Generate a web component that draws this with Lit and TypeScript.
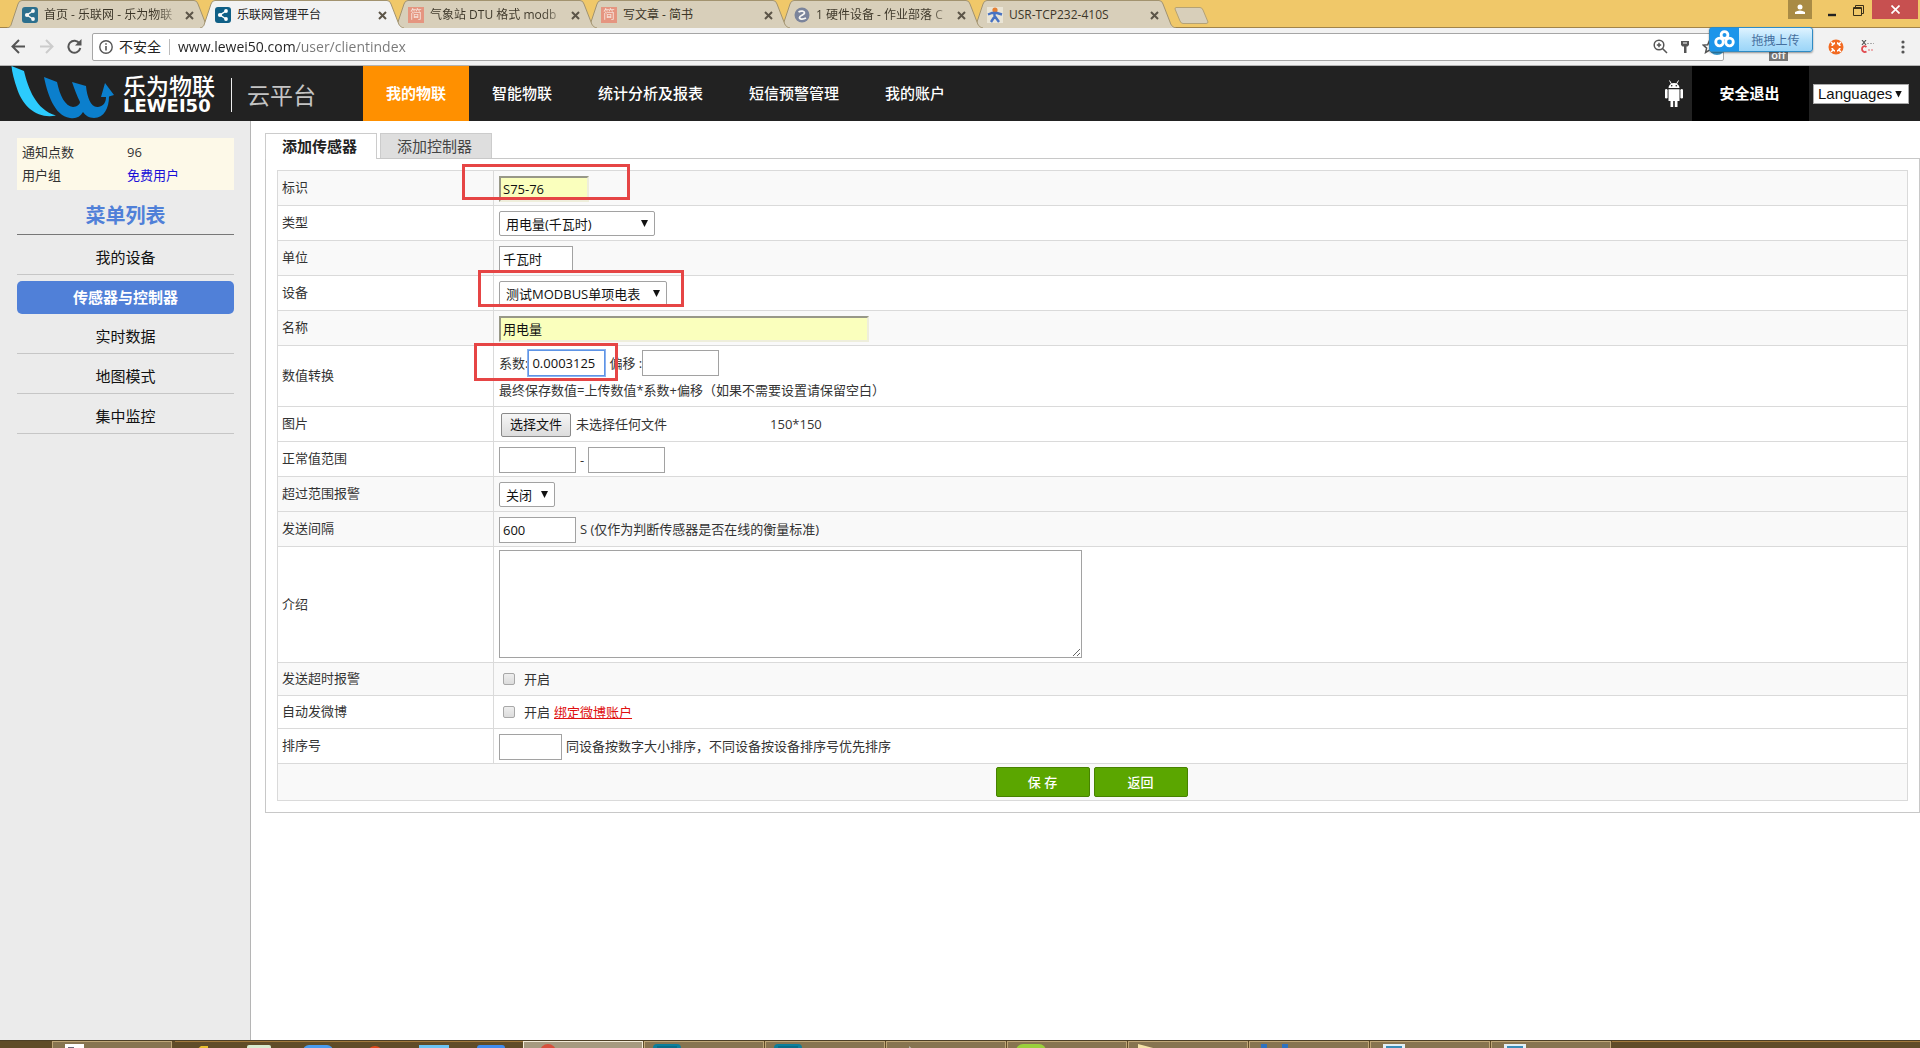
import { LitElement, html, svg, css } from "lit";
import { customElement } from "lit/decorators.js";
import { classMap } from "lit/directives/class-map.js";

const shareIcon = html`<svg class="fav" viewBox="0 0 16 16" aria-hidden="true">
  <rect width="16" height="16" rx="3" fill="#0f5f86" />
  <path d="M11 4 5 8l6 4" stroke="#fff" stroke-width="1.5" fill="none" />
  <circle cx="11" cy="4" r="1.9" fill="#fff" /><circle cx="5" cy="8" r="2.1" fill="#fff" />
  <circle cx="11" cy="12" r="1.9" fill="#fff" />
</svg>`;
const jianIcon = html`<span class="fav jian" aria-hidden="true">简</span>`;
const zIcon = html`<svg class="fav" viewBox="0 0 16 16" aria-hidden="true">
  <circle cx="8" cy="8" r="7.5" fill="#6b7896" />
  <path d="M4.500 5C7 3.500 10.500 4 10.500 6 10.500 8 5.500 8.500 5.500 10.500 5.500 12.500 9 12.500 12 11" stroke="#fff" stroke-width="1.800" fill="none" />
</svg>`;
const manIcon = html`<svg class="fav" viewBox="0 0 16 16" aria-hidden="true">
  <rect width="16" height="16" fill="#eee9dc" />
  <circle cx="8" cy="3" r="2.600" fill="#e8731c" />
  <path d="M1 7.500 5 6h5l5 1.500M7.500 6v4M7.500 9.500 4 15M8 9.500l4 5.500" stroke="#2f62c4" stroke-width="2.400" fill="none" />
</svg>`;

const browserTabs = [
  { title: "首页 - 乐联网 - 乐为物联", icon: shareIcon, active: false, fade: true },
  { title: "乐联网管理平台", icon: shareIcon, active: true, fade: false },
  { title: "气象站 DTU 格式 modb", icon: jianIcon, active: false, fade: true },
  { title: "写文章 - 简书", icon: jianIcon, active: false, fade: false },
  { title: "1 硬件设备 - 作业部落 C", icon: zIcon, active: false, fade: true },
  { title: "USR-TCP232-410S", icon: manIcon, active: false, fade: false },
];

@customElement("browser-chrome")
class BrowserChrome extends LitElement {
  static styles = css`
    :host { display: block; position: relative; font: 12px/16px "Open Sans", "Noto Sans CJK SC", sans-serif; }
    button { border: 0; padding: 0; background: none; font: inherit; color: inherit; display: grid; place-items: center; }
    .strip { display: flex; height: 28px; background: #f0c869; padding-left: 7px; border-bottom: 1px solid #a28449; box-sizing: border-box; }
    .tabs { display: flex; position: relative; }
    .tab { position: relative; width: 193px; height: 28px; display: flex; align-items: center; box-sizing: border-box; padding: 2px 0 0 15px; z-index: 1; color: #3c3628; }
    .tab:nth-child(1) { z-index: 6; } .tab:nth-child(3) { z-index: 5; } .tab:nth-child(4) { z-index: 4; }
    .tab:nth-child(5) { z-index: 3; } .tab:nth-child(6) { z-index: 2; }
    .tab.active { z-index: 9; color: #222; }
    .shape { position: absolute; left: 0; top: 0; width: 204px; height: 28px; z-index: -1; fill: #d8cfba; stroke: #a2936f; }
    .active .shape { fill: #f2f2f2; }
    .fav { width: 16px; height: 16px; flex: none; margin-right: 6px; }
    .tab:not(.active) .fav { opacity: 0.85; }
    .jian { background: #e88b76; color: #fbe3dc; font-size: 12px; line-height: 16px; text-align: center; }
    .title { flex: 1; white-space: nowrap; }
    .fade { color: transparent; background: linear-gradient(90deg, #3c3628 85%, #3c362833 100%) text; }
    .x { width: 9px; height: 9px; margin: 0 6px 0 8px; stroke: #5c5548; stroke-width: 2; }
    .new { width: 38px; height: 19px; margin: 6px 0 0 8px; }
    .grow { flex: 1; }
    .user { width: 24px; height: 19px; background: #a98b45; margin-right: 7px; }
    .win { width: 26px; height: 19px; }
    .win svg { margin-top: 2px; }
    .close { width: 46px; height: 19px; background: #c75050; margin: 0 2px 0 1px; }
    .bar { display: flex; align-items: center; height: 38px; background: #f2f2f2; border-bottom: 1px solid #b4b4b4; box-sizing: border-box; padding: 0 11px; }
    .nav { width: 28px; height: 28px; place-items: center start; }
    .addr { flex: 1; display: flex; align-items: center; height: 28px; box-sizing: border-box; background: #fff; border: 1px solid #a6a6a6; border-radius: 2px; padding: 0 6px; margin-right: 185px; font-size: 14px; color: #222; margin-left: -3px; }
    .sec { padding: 0 8px 0 6px; border-right: 1px solid #bbb; line-height: 16px; margin-right: 8px; }
    .url { flex: 1; border: 0; outline: 0; padding: 0; font: inherit; background: linear-gradient(90deg, #222 119px, #777 119px) text; color: transparent; }
    .tools { display: flex; gap: 12px; align-items: center; }
    .ext { display: flex; align-items: center; position: absolute; right: 12px; top: 39px; gap: 17px; }
    .hidden-ext { position: absolute; right: 131px; top: 45px; display: flex; gap: 48px; }
    .dot { width: 16px; height: 10px; border-radius: 0 0 8px 8px; background: #8fa3ae; }
    .dot.first { background: #3a9bd0; }
    .off { position: absolute; right: 132px; top: 50px; width: 19px; height: 11px; background: #777; color: #fff; font-weight: 600; line-height: 10px; text-align: center; font-size: 11px; }
    .upload { position: absolute; right: 107px; top: 27px; width: 104px; height: 25px; box-sizing: border-box; border: 1px solid #2f8bc4; border-radius: 3px; display: flex; background: linear-gradient(#dff3ff, #b7e2fb 50%, #9bd5f8); box-shadow: 0 1px 2px #0006; color: #456f9e; z-index: 12; }
    .upload span { flex: 1; padding-top: 2px; }
    .cloud { width: 29px; height: 23px; background: #1d95ea; }
  `;
  render() {
    return html`
      <div class="strip">
        <div class="tabs">
          ${browserTabs.map(
            (t) => html`<div class=${classMap({ tab: true, active: t.active })}>
              <svg class="shape" viewBox="0 0 204 28" aria-hidden="true">
                <path d="M0 28C4 27 4 25 5 22L11 4Q12 .5 15 .5H187Q190 .5 191 4L198 22C199 25 200 27 204 28" />
              </svg>
              ${t.icon}<span class=${classMap({ title: true, fade: t.fade })}>${t.title}</span>
              <button aria-label="关闭标签"><svg class="x" viewBox="0 0 9 9"><path d="M1 1l7 7M8 1 1 8" /></svg></button>
            </div>`
          )}
        </div>
        <button class="new" aria-label="新标签">
          <svg width="38" height="19" viewBox="0 0 38 19"><path d="M3 1.500H27Q29 1.500 30 4L35 16Q35 17.500 33 17.500H10Q8 17.500 7 15L2 3Q2 1.500 3 1.500Z" fill="#d8cfba" stroke="#b5a274" /></svg>
        </button>
        <span class="grow"></span>
        <button class="user" aria-label="用户"><svg width="10" height="12" viewBox="0 0 10 12" fill="#fff"><circle cx="5" cy="3" r="2.500" /><path d="M0 10V8q5-3 10 0v2z" /></svg></button>
        <button class="win" aria-label="最小化"><svg width="8" height="12" viewBox="0 0 8 12"><path d="M0 10h8" stroke="#222" stroke-width="2.400" /></svg></button>
        <button class="win" aria-label="还原"><svg width="11" height="11" viewBox="0 0 11 11" fill="none" stroke="#3a3018"><path d="M2.500 2.500V.5h8v8h-2" /><path d="M.5 2.500h8v8h-8zM.5 3.500h8" /></svg></button>
        <button class="close" aria-label="关闭"><svg width="9" height="9" viewBox="0 0 9 9" stroke="#fff" stroke-width="1.700"><path d="M.5.5l8 8M8.500.5l-8 8" /></svg></button>
      </div>
      <div class="bar">
        <button class="nav" aria-label="后退"><svg width="15" height="15" viewBox="0 0 15 15" fill="none" stroke="#555" stroke-width="2"><path d="M14 7.500H2M8 1 1.500 7.500 8 14" /></svg></button>
        <button class="nav" aria-label="前进"><svg width="15" height="15" viewBox="0 0 15 15" fill="none" stroke="#ccc" stroke-width="2"><path d="M1 7.500h12M7 1l6.500 6.500L7 14" /></svg></button>
        <button class="nav" aria-label="刷新"><svg width="15" height="15" viewBox="0 0 15 15" fill="none" stroke="#555" stroke-width="2"><path d="M12.500 4.500A6 6 0 1 0 13.300 9" /><path d="M14.500 0v6.500H8z" fill="#555" stroke="none" /></svg></button>
        <div class="addr">
          <svg width="14" height="14" viewBox="0 0 14 14" fill="none" stroke="#555" stroke-width="1.400"><circle cx="7" cy="7" r="6.200" /><path d="M7 6v4.500M7 3.200v1.600" stroke-width="1.600" /></svg>
          <span class="sec">不安全</span>
          <input class="url" aria-label="网址" .value=${"www.lewei50.com/user/clientindex"} />
          <div class="tools">
            <svg width="15" height="15" viewBox="0 0 15 15" fill="none" stroke="#555" stroke-width="1.500"><circle cx="6" cy="6" r="4.800" /><path d="M9.500 9.500 14 14M6 3.800v4.400M3.800 6h4.400" /></svg>
            <svg width="10" height="14" viewBox="0 0 10 14"><path d="M1 1h8v4L7.500 6.500H6.500V13H4V6.500H2.500L1 5z" fill="#555" /><path d="M3 3h4" stroke="#fff" /></svg>
            <svg width="15" height="15" viewBox="0 0 15 15" fill="none" stroke="#555" stroke-width="1.500"><path d="M7.500 1.500l1.800 4.200 4.500.4-3.400 3 1 4.400-3.900-2.400-3.900 2.400 1-4.400-3.400-3 4.500-.4z" /></svg>
          </div>
        </div>
      </div>
      <div class="hidden-ext"><span class="dot first"></span><span class="dot"></span></div>
      <span class="off">off</span>
      <div class="ext">
        <svg width="16" height="16" viewBox="0 0 16 16"><circle cx="8" cy="8" r="7.500" fill="#f26a21" /><circle cx="8" cy="8" r="4" fill="none" stroke="#fff" stroke-width="1.800" /><path d="M5 5 3 3M11 5l2-2M5 11l-2 2M11 11l2 2" stroke="#fff" stroke-width="1.500" /><path d="M8 2v3.500M2 8h3.500M8 14v-3.500M14 8h-3.500" stroke="#f26a21" stroke-width="2" /></svg>
        <svg width="14" height="14" viewBox="0 0 14 14" fill="none"><path d="M1 0l4 5M5 0 1 5" stroke="#555" stroke-width="1.200" /><path d="M6 3.500h7" stroke="#aaa" stroke-dasharray="2 1" /><path d="M5.500 7C3 5 1 7 1 9s2 4 4.500 2.500" stroke="#e0474c" stroke-width="1.800" /><path d="M7 10h6" stroke="#e9989a" stroke-width="1.500" stroke-dasharray="2 1" /></svg>
        <svg width="16" height="16" viewBox="0 0 16 16" fill="#555"><circle cx="11" cy="3" r="1.600" /><circle cx="11" cy="8" r="1.600" /><circle cx="11" cy="13" r="1.600" /></svg>
      </div>
      <button class="upload">
        <svg class="cloud" viewBox="0 0 29 23" fill="none" stroke="#fff" stroke-width="2.800"><circle cx="14.500" cy="7" r="3.400" /><circle cx="9.500" cy="14" r="3.800" /><circle cx="19.500" cy="14" r="3.800" /></svg>
        <span>拖拽上传</span>
      </button>
    `;
  }
}

@customElement("site-header")
class SiteHeader extends LitElement {
  static styles = css`
    :host { display: flex; height: 55px; background: #222; color: #fff; font: 15px/20px "Open Sans", "Noto Sans CJK SC", sans-serif; }
    a { color: inherit; text-decoration: none; }
    .logo { display: flex; align-items: center; width: 363px; box-sizing: border-box; padding-left: 10px; }
    .name { display: flex; flex-direction: column; margin-left: 7px; padding-top: 2px; width: 93px; }
    .cn { font-size: 23px; line-height: 22px; font-weight: 500; }
    .en { font: bold 18px/18px "DejaVu Sans", sans-serif; }
    .cloud { border-left: 1px solid #eee; margin-left: 15px; padding-left: 15px; font-size: 23px; line-height: 34px; color: #c4c4c4; margin-top: 2px; }
    nav { display: flex; flex: 1; }
    .item { display: flex; align-items: center; padding: 0 23px 1px; font-weight: 500; }
    .on { background: #ff9000; font-weight: bold; }
    .droid { align-self: center; margin-right: 9px; }
    .exit { display: flex; align-items: center; justify-content: center; width: 115px; padding: 0 2px 1px 0; background: #000; font-weight: bold; }
    .lang { align-self: center; position: relative; margin: 0 11px 0 4px; color: #111; }
    select { appearance: none; width: 96px; height: 20px; border: 1px solid #aaa; border-radius: 0; background: #fff; font: 15px/18px "Liberation Sans", sans-serif; padding: 0 0 0 4px; color: #111; display: block; }
    .lang::after { content: ""; position: absolute; right: 7px; top: 7px; width: 7px; height: 7px; background: #111; clip-path: polygon(0 0, 100% 0, 50% 100%); pointer-events: none; }
  `;
  render() {
    return html`
      <a class="logo" href="#">
        <svg width="106" height="55" viewBox="10 66 106 55" aria-hidden="true">
          <path d="M11.500 66 24 71C28 88 36 110 56 115.500 38 119 24 108 17.500 90 14 80 12 72 11.500 66Z" fill="#2ccbfd" />
          <path d="M44 77 57 82C60 96 65 106 73 107 77 107 80 104 80 102 77 96 74 88 72 82L86 86C87 97 91 108 98 107 104 106 106 102 106 97L101 97 105 83 114 95 109 96.500C109 108 104 118 94 118 89 118 85 115 83 112 80 117 76 119 70 118 54 116 47 92 44 77Z" fill="#0b7fcd" />
        </svg>
        <span class="name"><span class="cn">乐为物联</span><span class="en">LEWEI50</span></span>
        <span class="cloud">云平台</span>
      </a>
      <nav>
        <a class="item on" href="#">我的物联</a><a class="item" href="#">智能物联</a><a class="item" href="#">统计分析及报表</a><a class="item" href="#">短信预警管理</a><a class="item" href="#">我的账户</a>
      </nav>
      <svg class="droid" width="18" height="27" viewBox="0 0 18 27" fill="#fff" aria-hidden="true">
        <path d="M3.500 8a5.500 5 0 0 1 11 0zM3.500 9.200h11V21h-11zM5.500 21h2.700v6H5.500zM9.800 21h2.700v6H9.800z" />
        <rect y="9" width="2.600" height="9.500" rx="1.300" /><rect x="15.400" y="9" width="2.600" height="9.500" rx="1.300" />
        <path d="M4.500.5 6.500 4M13.500.5 11.500 4" stroke="#fff" /><circle cx="6.700" cy="5.800" r=".8" fill="#222" /><circle cx="11.300" cy="5.800" r=".8" fill="#222" />
      </svg>
      <a class="exit" href="#">安全退出</a>
      <span class="lang"><select aria-label="Languages"><option>Languages</option></select></span>
    `;
  }
}

@customElement("side-menu")
class SideMenu extends LitElement {
  static styles = css`
    :host { display: block; width: 251px; box-sizing: border-box; background: #ebebeb; border-right: 1px solid #b5b5b5; padding: 17px 16px 0 17px; font: 15px/20px "Open Sans", "Noto Sans CJK SC", sans-serif; color: #111; }
    .info { display: grid; grid-template-columns: 105px 1fr; background: #fdf9e8; margin: 0; padding: 3px 5px; font-size: 13px; line-height: 23px; color: #333; }
    dd { margin: 0; }
    .info a { color: #1a10d8; text-decoration: none; }
    h2 { margin: 0; font-size: 20px; line-height: 36px; padding-top: 8px; color: #5080d8; text-align: center; border-bottom: 1px solid #777; }
    .item { display: block; height: 39px; line-height: 44px; text-align: center; border-bottom: 1px solid #c6c6c6; color: inherit; text-decoration: none; }
    .on { height: 33px; line-height: 32px; margin-top: 6px; border: 0; border-radius: 5px; background: #5080d8; color: #fff; font-weight: bold; }
  `;
  render() {
    return html`
      <dl class="info"><dt>通知点数</dt><dd>96</dd><dt>用户组</dt><dd><a href="#">免费用户</a></dd></dl>
      <h2>菜单列表</h2>
      <a class="item" href="#">我的设备</a>
      <a class="item on" href="#">传感器与控制器</a>
      <a class="item" href="#">实时数据</a>
      <a class="item" href="#">地图模式</a>
      <a class="item" href="#">集中监控</a>
    `;
  }
}

@customElement("sensor-form")
class SensorForm extends LitElement {
  static styles = css`
    :host { display: block; flex: 1; min-width: 0; padding: 12px 0 0 14px; font: 13px/20px "Open Sans", "Noto Sans CJK SC", sans-serif; color: #333; }
    .tabs { display: flex; gap: 3px; }
    .tab { box-sizing: border-box; width: 112px; height: 25px; padding: 0 3px 0 0; border: 1px solid #ccc; border-bottom: 0; background: #dedede; font: 15px/23px "Open Sans", "Noto Sans CJK SC", sans-serif; color: #444; }
    .tab.on { background: #fff; height: 26px; margin-bottom: -1px; position: relative; font-weight: bold; color: #222; }
    .panel { border: 1px solid #c8c8c8; padding: 11px; }
    table { width: 100%; border-collapse: collapse; table-layout: fixed; }
    th, td { border: 1px solid #dadada; padding: 0 5px; text-align: left; font-weight: normal; }
    th { width: 206px; padding: 0 5px 2px 4px; }
    tr { height: 35px; }
    tr.alt { background: #f9f9f9; }
    tr.low { height: 33px; } tr.duo { height: 61px; } tr.area { height: 116px; } tr.end { height: 37px; }
    td { position: relative; }
    .line { display: flex; align-items: center; padding-top: 1px; height: 26px; }
    .low .line { padding: 0; }
    .hint { padding-bottom: 2px; }
    input, textarea { box-sizing: border-box; font: inherit; color: #111; border: 1px solid #a2a2a2; background: #fff; padding: 0 3px; margin: 0; height: 26px; outline: 0; }
    .fill { background: #faffbd; border: 2px solid; padding: 0 2px; border-color: #989888 #eeeedc #eeeedc #989888; }
    .focus { border-color: #5e94e6; box-shadow: 0 0 0 1px #8db3ef; }
    .id { width: 90px; } .unit { width: 74px; } .name { width: 370px; } .num { width: 77px; } .sort { width: 63px; }
    .after { margin-left: 4px; }
    .pick { position: relative; display: block; }
    select { appearance: none; box-sizing: border-box; height: 25px; border: 1px solid #a2a2a2; border-radius: 2px; background: #fff; font: inherit; color: #111; padding: 0 0 0 6px; display: block; }
    .type { width: 156px; } .dev { width: 168px; } .alarm { width: 56px; }
    .pick::after { content: ""; position: absolute; right: 7px; top: 9px; width: 7px; height: 7px; background: #111; clip-path: polygon(0 0, 100% 0, 50% 100%); pointer-events: none; }
    textarea { display: block; width: 583px; height: 108px; margin-bottom: 1px; }
    .file { box-sizing: border-box; width: 70px; height: 24px; line-height: 21px; margin: 0 5px 0 2px; border: 1px solid #8a8a8a; border-radius: 2px; background: linear-gradient(#f6f6f6, #dcdcdc); color: #111; text-align: center; }
    .real { position: absolute; width: 1px; height: 1px; opacity: 0; padding: 0; }
    .size { margin-left: 103px; }
    .check { appearance: none; width: 12px; height: 12px; margin: 0 9px 0 4px; padding: 0; border: 1px solid #a8a8a8; border-radius: 2px; background: linear-gradient(#eee, #dcdcdc); }
    .check:checked { background: #5080d8; }
    .bind { color: #e01010; margin-left: 4px; }
    .btns { display: flex; justify-content: center; gap: 4px; padding-right: 2px; }
    .btn { width: 94px; height: 30px; border: 1px solid #478200; border-radius: 2px; background: #5ba600; color: #fff; font: inherit; font-weight: 500; padding: 0 0 1px; }
    .mark { position: absolute; border: 3px solid #e64545; box-sizing: border-box; pointer-events: none; z-index: 2; }
    .m1 { left: -32px; top: -7px; width: 168px; height: 36px; }
    .m2 { left: -16px; top: -6px; width: 206px; height: 37px; }
    .m3 { left: -20px; top: -3px; width: 144px; height: 38px; }
  `;
  render() {
    return html`
      <div class="tabs"><button class="tab on">添加传感器</button><button class="tab">添加控制器</button></div>
      <div class="panel">
        <table>
          <tr class="alt"><th><label for="id">标识</label></th><td><div class="line"><input id="id" class="fill id" .value=${"S75-76"} /></div><i class="mark m1"></i></td></tr>
          <tr><th><label for="type">类型</label></th><td><div class="line"><span class="pick"><select id="type" class="type"><option>用电量(千瓦时)</option></select></span></div></td></tr>
          <tr class="alt"><th><label for="unit">单位</label></th><td><div class="line"><input id="unit" class="unit" .value=${"千瓦时"} /></div></td></tr>
          <tr><th><label for="dev">设备</label></th><td><div class="line"><span class="pick"><select id="dev" class="dev"><option>测试MODBUS单项电表</option></select></span></div><i class="mark m2"></i></td></tr>
          <tr class="alt"><th><label for="name">名称</label></th><td><div class="line"><input id="name" class="fill name" .value=${"用电量"} /></div></td></tr>
          <tr class="duo"><th>数值转换</th><td>
            <div class="line"><label for="k">系数:</label><input id="k" class="num focus" .value=${"0.0003125"} /><label class="after" for="o">偏移 :</label><input id="o" class="num" /></div>
            <div class="line">最终保存数值=上传数值*系数+偏移（如果不需要设置请保留空白）</div><i class="mark m3"></i></td></tr>
          <tr><th>图片</th><td><div class="line"><label class="file" for="pic">选择文件</label><input class="real" id="pic" type="file" /><span class="hint">未选择任何文件</span><span class="size hint">150*150</span></div></td></tr>
          <tr><th><label for="lo">正常值范围</label></th><td><div class="line"><input id="lo" class="num" /><span class="after">-</span><input class="num after" aria-label="最大值" /></div></td></tr>
          <tr class="alt"><th><label for="alarm">超过范围报警</label></th><td><div class="line"><span class="pick"><select id="alarm" class="alarm"><option>关闭</option></select></span></div></td></tr>
          <tr class="alt"><th><label for="gap">发送间隔</label></th><td><div class="line"><input id="gap" class="num" .value=${"600"} /><span class="after hint">S (仅作为判断传感器是否在线的衡量标准)</span></div></td></tr>
          <tr class="area"><th><label for="intro">介绍</label></th><td><textarea id="intro"></textarea></td></tr>
          <tr class="alt low"><th>发送超时报警</th><td><div class="line"><input class="check" id="late" type="checkbox" /><label for="late">开启</label></div></td></tr>
          <tr class="low"><th>自动发微博</th><td><div class="line"><input class="check" id="weibo" type="checkbox" /><label for="weibo">开启</label><a class="bind" href="#">绑定微博账户</a></div></td></tr>
          <tr><th><label for="sort">排序号</label></th><td><div class="line"><input id="sort" class="sort" /><span class="after hint">同设备按数字大小排序，不同设备按设备排序号优先排序</span></div></td></tr>
          <tr class="alt end"><td colspan="2"><div class="btns"><button class="btn">保 存</button><button class="btn">返回</button></div></td></tr>
        </table>
      </div>
    `;
  }
}

const pinned = [
  svg`<path d="M6 8 14 1h7v3L13 8z" fill="#e8c02e" />`,
  svg`<rect x="2" width="24" height="9" rx="2" fill="#d8ecd0" /><path d="M6 3h15v5H6z" fill="#f6fbf3" />`,
  svg`<rect width="30" height="12" rx="6" fill="#4a9cf0" />`,
  svg`<circle cx="14" cy="9" r="8" fill="#e0491c" />`,
  svg`<rect width="30" height="9" fill="#6cc4f4" />`,
  svg`<rect width="28" height="9" rx="3" fill="#3f8cf0" />`,
];
const running = [
  svg`<circle cx="10" cy="8" r="8" fill="#d8503c" />`,
  svg`<rect width="28" height="12" rx="4" fill="#0c7f9c" /><path d="M4 3h20" stroke="#075a72" />`,
  svg`<rect width="28" height="12" rx="4" fill="#0c7f9c" /><path d="M4 3h20" stroke="#075a72" />`,
  svg`<path d="M14 2l7 6h-7z" fill="#b8b8a8" />`,
  svg`<rect width="30" height="14" rx="7" fill="#9ad03c" />`,
  svg`<path d="M1 0 20 5v3H1z" fill="#f4e2a8" />`,
  svg`<path d="M3 0h6v8H3zM24 0h6v8h-6z" fill="#2e72c0" />`,
  svg`<path d="M4 0h22v8H4z" fill="#e2f0f6" /><path d="M7 3h16" stroke="#3a8cb8" stroke-width="2" />`,
  svg`<path d="M4 0h22v8H4z" fill="#e2f0f6" /><path d="M7 3h16" stroke="#3a8cb8" stroke-width="2" />`,
];

@customElement("task-bar")
class TaskBar extends LitElement {
  static styles = css`
    :host { display: flex; height: 8px; box-sizing: border-box; background: #604c28; border-top: 1px solid #4d3f26; overflow: hidden; }
    .task { box-sizing: border-box; width: 120px; margin-right: 1px; background: #877450; border: 1px solid #c0a777; border-bottom: 0; padding: 2px 0 0 8px; overflow: hidden; }
    .task.hot { background: #a69a80; border-color: #f4ecd8; padding-left: 14px; }
    .first { margin: 0 3px 0 52px; padding-left: 9px; }
    .pin { box-sizing: border-box; width: 58px; padding: 3px 0 0 12px; border-top: 1px solid #a27a3c; overflow: hidden; }
    .rest { flex: 1; border-top: 1px solid #a27a3c; }
    svg { display: block; width: 30px; height: 8px; }
  `;
  render() {
    const icon = (g: unknown) => html`<svg viewBox="0 0 30 8" aria-hidden="true">${g}</svg>`;
    return html`
      <div class="task first">${icon(svg`<path d="M3 0h19v8H3z" fill="#fff" /><path d="M6 3h6v5H6z" fill="#667" />`)}</div>
      ${pinned.map((p) => html`<div class="pin">${icon(p)}</div>`)}
      ${running.map((r, i) => html`<div class=${classMap({ task: true, hot: i === 0 })}>${icon(r)}</div>`)}
      <div class="rest"></div>
    `;
  }
}

@customElement("app-root")
class AppRoot extends LitElement {
  static styles = css`
    :host { display: flex; flex-direction: column; min-height: 100vh; background: #fff; }
    main { flex: 1; display: flex; }
  `;
  render() {
    return html`
      <browser-chrome></browser-chrome>
      <site-header></site-header>
      <main><side-menu></side-menu><sensor-form></sensor-form></main>
      <task-bar></task-bar>
    `;
  }
}
